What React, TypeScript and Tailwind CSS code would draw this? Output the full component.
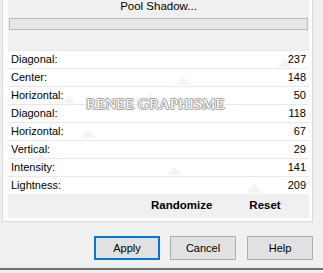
import React from 'react';

const rows: [string, number][] = [
  ['Diagonal:', 237],
  ['Center:', 148],
  ['Horizontal:', 50],
  ['Diagonal:', 118],
  ['Horizontal:', 67],
  ['Vertical:', 29],
  ['Intensity:', 141],
  ['Lightness:', 209],
];

const tris: [number, number, number, number][] = [
  [175, 77, 17, 8],
  [278, 58, 14, 9],
  [63, 95, 12, 8],
  [142, 93, 15, 9],
  [80, 130, 17, 8],
  [33, 153, 14, 7],
  [167, 167, 16, 8],
  [247, 183, 16, 10],
];

export default function App() {
  return (
    <div className="relative w-[323px] h-[273px] overflow-hidden bg-[#f0f0f0] flex flex-col font-['Liberation_Sans',Arial,sans-serif] text-[11px] text-black">
      {/* tab page */}
      <div className="ml-[2px] w-[311px] h-[222px] shrink-0 bg-white border-x border-b border-[#d9d9d9] pl-[5px] pr-[3px] pb-[2px] flex flex-col">
        <div className="h-[50px] bg-[#f0f0f0] flex flex-col">
          <div className="h-[15px] flex items-center justify-center text-[11.5px] -mt-[1px]">Pool Shadow...</div>
          <div className="mt-[4px] ml-[1px] w-[299px] h-[12px] bg-[#e6e6e6] border border-[#bcbcbc]" />
        </div>
        <div className="flex flex-col">
          {rows.map(([label, value], i) => (
            <div
              key={i}
              className="h-[18px] flex items-center justify-between pl-[3px] pr-[3px] border-t border-[#e8e8e8] bg-white"
            >
              <span>{label}</span>
              <span>{value}</span>
            </div>
          ))}
        </div>
        <div className="h-[24px] bg-[#f0f0f0] flex items-center font-bold text-[11.5px]">
          <span className="ml-[143px]">Randomize</span>
          <span className="ml-[37px]">Reset</span>
        </div>
      </div>

      {/* dialog buttons */}
      <div className="mt-[14px] flex justify-end gap-[10px] pr-[10px]">
        <button className="w-[66px] h-[24px] bg-[#e1e1e1] border-2 border-[#0078d7] flex items-center justify-center">
          Apply
        </button>
        <button className="w-[66px] h-[24px] bg-[#e1e1e1] border border-[#adadad] flex items-center justify-center">
          Cancel
        </button>
        <button className="ml-[1px] w-[66px] h-[24px] bg-[#e1e1e1] border border-[#adadad] flex items-center justify-center">
          Help
        </button>
      </div>
      <div className="mt-auto h-[2px] bg-[#707070] mb-[3px]" />

      {/* watermark overlay */}
      <svg className="absolute left-0 top-0 pointer-events-none" width="323" height="273">
        {tris.map(([x, y, w, h], i) => (
          <polygon key={i} points={`${x},${y + h} ${x + w / 2},${y} ${x + w},${y + h}`} fill="#ececec" opacity="0.6" />
        ))}
      </svg>
      <div className="absolute left-[86px] top-[97px] pointer-events-none font-['Liberation_Serif',serif] text-[15px] leading-none text-white [text-shadow:1px_0_0_#9a9a9a,-1px_0_0_#9a9a9a,0_1px_0_#9a9a9a,0_-1px_0_#9a9a9a]">
        RENEE GRAPHISME
      </div>
    </div>
  );
}
